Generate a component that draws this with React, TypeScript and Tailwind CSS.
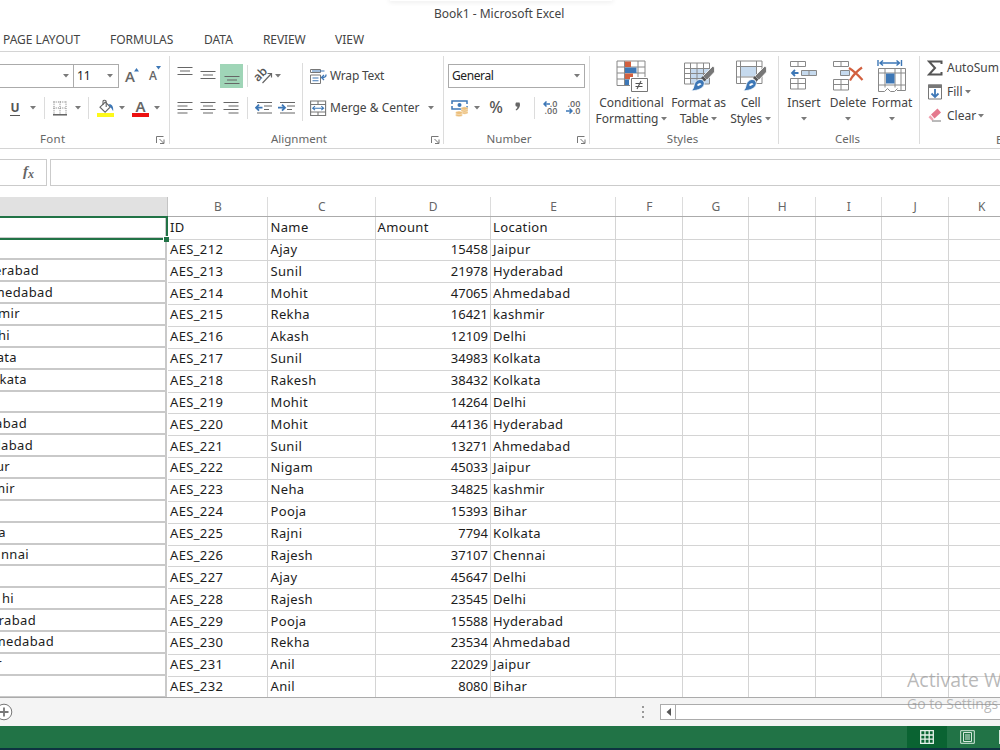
import type { ReactNode } from 'react'
import clsx from 'clsx'

type Row = {
  edge: string
  edgeEnd: number
  id: string
  name: string
  amount: string
  location: string
}

const rows: Row[] = [
  { edge: '', edgeEnd: 0, id: 'ID', name: 'Name', amount: 'Amount', location: 'Location' },
  { edge: '', edgeEnd: 0, id: 'AES_212', name: 'Ajay', amount: '15458', location: 'Jaipur' },
  { edge: 'erabad', edgeEnd: 39, id: 'AES_213', name: 'Sunil', amount: '21978', location: 'Hyderabad' },
  { edge: 'medabad', edgeEnd: 53, id: 'AES_214', name: 'Mohit', amount: '47065', location: 'Ahmedabad' },
  { edge: 'mir', edgeEnd: 20, id: 'AES_215', name: 'Rekha', amount: '16421', location: 'kashmir' },
  { edge: 'hi', edgeEnd: 10, id: 'AES_216', name: 'Akash', amount: '12109', location: 'Delhi' },
  { edge: 'ata', edgeEnd: 17, id: 'AES_217', name: 'Sunil', amount: '34983', location: 'Kolkata' },
  { edge: 'kata', edgeEnd: 27, id: 'AES_218', name: 'Rakesh', amount: '38432', location: 'Kolkata' },
  { edge: '', edgeEnd: 0, id: 'AES_219', name: 'Mohit', amount: '14264', location: 'Delhi' },
  { edge: 'abad', edgeEnd: 27, id: 'AES_220', name: 'Mohit', amount: '44136', location: 'Hyderabad' },
  { edge: 'dabad', edgeEnd: 33, id: 'AES_221', name: 'Sunil', amount: '13271', location: 'Ahmedabad' },
  { edge: 'ur', edgeEnd: 10, id: 'AES_222', name: 'Nigam', amount: '45033', location: 'Jaipur' },
  { edge: 'mir', edgeEnd: 15, id: 'AES_223', name: 'Neha', amount: '34825', location: 'kashmir' },
  { edge: '', edgeEnd: 0, id: 'AES_224', name: 'Pooja', amount: '15393', location: 'Bihar' },
  { edge: 'a', edgeEnd: 6, id: 'AES_225', name: 'Rajni', amount: '7794', location: 'Kolkata' },
  { edge: 'nnai', edgeEnd: 29, id: 'AES_226', name: 'Rajesh', amount: '37107', location: 'Chennai' },
  { edge: '', edgeEnd: 0, id: 'AES_227', name: 'Ajay', amount: '45647', location: 'Delhi' },
  { edge: 'hi', edgeEnd: 14, id: 'AES_228', name: 'Rajesh', amount: '23545', location: 'Delhi' },
  { edge: 'rabad', edgeEnd: 36, id: 'AES_229', name: 'Pooja', amount: '15588', location: 'Hyderabad' },
  { edge: 'medabad', edgeEnd: 54, id: 'AES_230', name: 'Rekha', amount: '23534', location: 'Ahmedabad' },
  { edge: 'r', edgeEnd: 2, id: 'AES_231', name: 'Anil', amount: '22029', location: 'Jaipur' },
  { edge: '', edgeEnd: 0, id: 'AES_232', name: 'Anil', amount: '8080', location: 'Bihar' },
]

const letters = ['B', 'C', 'D', 'E', 'F', 'G', 'H', 'I', 'J', 'K']
const emptyColumns = ['F', 'G', 'H', 'I', 'J', 'K']

const columns = 'grid w-[1015px] grid-cols-[168px_100px_107.5px_115.5px_125px_66.5px_66.5px_66.5px_66.5px_66.5px_66.5px]'

function Caret() {
  return (
    <svg width="6" height="4" viewBox="0 0 6 4" className="shrink-0">
      <path d="M0 0h6L3 3.6z" fill="#7a7a7a" />
    </svg>
  )
}

function Slot({ className, children }: { className: string; children?: ReactNode }) {
  return <div className={clsx('flex h-full shrink-0 items-center justify-center', className)}>{children}</div>
}

function Rule({ className }: { className?: string }) {
  return <div className={clsx('h-[22px] w-px shrink-0 bg-[#dcdcdc]', className)} />
}

function Launcher() {
  return (
    <svg width="9" height="8" viewBox="0 0 9 8" fill="none" stroke="#777">
      <path d="M.5 7V.5h7M3.5 3l4 4M8 3.5v4H4" />
    </svg>
  )
}

function Group({ label, className, launcher, children }: { label: string; className: string; launcher?: boolean; children: ReactNode }) {
  return (
    <section className={clsx('flex h-full shrink-0 flex-col pt-2', className)}>
      <div className="h-16">{children}</div>
      <div className="flex h-6 items-center pt-[5px] text-[11.5px] text-[#666]">
        <span className="flex-1 pr-[3px] text-center">{label}</span>
        {launcher ? <span className="w-[11px] shrink-0 pt-0.5"><Launcher /></span> : null}
      </div>
    </section>
  )
}

function Divider() {
  return <div className="mt-1 h-[88px] w-px shrink-0 bg-[#dcdcdc]" />
}

function Lines({ d }: { d: string }) {
  return (
    <svg width="16" height="20" viewBox="0 0 16 20" fill="none" stroke="#666" strokeWidth="1.2">
      <path d={d} />
    </svg>
  )
}

function GrowFont({ shrink }: { shrink?: boolean }) {
  return (
    <span className="flex items-start font-['Open_Sans',sans-serif] text-[#666]">
      <span className={clsx('font-semibold', shrink ? 'text-[12px] leading-[20px]' : 'text-[15px] leading-[17px]')}>A</span>
      <svg width="5" height="4" viewBox="0 0 5 4" className="-ml-px">
        <path d={shrink ? 'M0 0h5L2.5 3.5z' : 'M0 3.5h5L2.5 0z'} fill="#3d77b6" />
      </svg>
    </span>
  )
}

function BordersIcon() {
  return (
    <svg width="15" height="15" viewBox="0 0 15 15" fill="none">
      <path d="M.5 1h13M.5 7h13M1 .5V13M7 .5V13M13 .5V13" stroke="#777" strokeDasharray="1 1.2" />
      <path d="M0 13.8h14" stroke="#555" strokeWidth="1.4" />
    </svg>
  )
}

function FillColorIcon() {
  return (
    <svg width="18" height="19" viewBox="0 0 18 19" fill="none">
      <path d="M3 8.2 8.3 3l5 5-5.2 5.2z" fill="#fff" stroke="#666" strokeWidth="1.1" />
      <path d="M6 6V2.5C6 .8 9.2.8 9.2 2.5V8" stroke="#666" strokeWidth="1.1" />
      <path d="M11.5 5.5c3-.8 5 1.5 4.7 6.5-1.2-.7-1-2.3-3-4z" fill="#3d77b6" />
      <path d="M0 14h17v4H0z" fill="#fdf91a" />
    </svg>
  )
}

function OrientationIcon() {
  return (
    <svg width="20" height="18" viewBox="0 0 20 18" fill="none" className="overflow-visible">
      <text x="1" y="13.5" transform="rotate(-45 4 12)" fontSize="12" fontWeight="600" fontFamily="Open Sans" fill="#555">ab</text>
      <path d="m7.5 16 8.5-9M12.5 6.5h4v4" stroke="#666" strokeWidth="1.2" />
    </svg>
  )
}

function IndentIcon({ right }: { right?: boolean }) {
  return (
    <svg width="18" height="14" viewBox="0 0 18 14" fill="none">
      <path d="M2 1.5h15M9 5h8M9 8.5h5M2 12h15" stroke="#666" strokeWidth="1.2" />
      <path d={right ? 'M0 6.7h6M4 3.7l3 3-3 3' : 'M7.5 6.7H1.5M4 3.7l-3 3 3 3'} stroke="#3d77b6" strokeWidth="1.8" />
    </svg>
  )
}

function WrapIcon() {
  return (
    <svg width="17" height="17" viewBox="0 0 17 17" fill="none">
      <path d="M.5 1.5h10v3H.5zM.5 7h10v8.5H.5z" stroke="#777" />
      <path d="M2 3h12.5M2.5 10h6M2.5 12.7h6" stroke="#3d77b6" strokeWidth="1.1" />
      <path d="M16 6.5c.2 2-1 3-4 3M14 7l-2.5 2.5L14 12" stroke="#3d77b6" strokeWidth="1.3" />
    </svg>
  )
}

function MergeIcon() {
  return (
    <svg width="17" height="17" viewBox="0 0 17 17" fill="none">
      <path d="M.6 1h15v14.5H.6zM.6 4.5h15M.6 12h15M8 1v3.5M8 12v3.5" stroke="#777" strokeWidth="1.1" />
      <path d="M3 8.2h10.5M5 6.2l-2.3 2 2.3 2M11.3 6.2l2.3 2-2.3 2" stroke="#3d77b6" strokeWidth="1.1" />
    </svg>
  )
}

function MoneyIcon() {
  return (
    <svg width="18" height="17" viewBox="0 0 18 17" fill="none">
      <path d="M1 1h15v8H1z" stroke="#3d77b6" strokeWidth="1.5" />
      <path d="M1 4v2M16 4v2" stroke="#fff" strokeWidth="2" />
      <circle cx="8.5" cy="5" r="2" fill="#3d77b6" />
      <g fill="#ecbf7b" stroke="#fff" strokeWidth=".4">
        <ellipse cx="13.5" cy="12.5" rx="3.5" ry="1.7" />
        <ellipse cx="13.5" cy="10.5" rx="3.5" ry="1.7" />
        <ellipse cx="13.5" cy="8.5" rx="3.5" ry="1.7" />
        <ellipse cx="8" cy="15" rx="3.5" ry="1.7" />
        <ellipse cx="8" cy="12.8" rx="3.5" ry="1.7" />
      </g>
    </svg>
  )
}

function DecimalIcon({ decrease }: { decrease?: boolean }) {
  const arrow = (
    <svg width="7" height="6" viewBox="0 0 7 6" fill="none" stroke="#3d77b6" strokeWidth="1.5">
      <path d={decrease ? 'M0 3h6M3.5.5 6 3 3.5 5.5' : 'M7 3H1M3.5.5 1 3l2.5 2.5'} />
    </svg>
  )
  return (
    <div className="-mt-0.5 flex flex-col items-end font-['Open_Sans',sans-serif] text-[9px] leading-[7px] font-semibold text-[#666]">
      <span className="flex items-center">{decrease ? null : arrow}{decrease ? '.00' : '.0'}</span>
      <span className="flex items-center">{decrease ? arrow : null}{decrease ? '.0' : '.00'}</span>
    </div>
  )
}

function ConditionalIcon() {
  return (
    <svg width="32" height="32" viewBox="0 0 32 32" fill="none">
      <path d="M1 1h28v24H1z" fill="#fff" />
      <path d="M1 1h28v24.5H1zM1 7h28M1 13h28M1 19h28M8.5 1v24.5M22 1v24.5" stroke="#888" />
      <path d="M9 1.5h6V7H9zM9 13.5h8V19H9z" fill="#d2603f" />
      <path d="M9 7.5h11.5V13H9zM9 19.5h4V25H9z" fill="#3d77b6" />
      <path d="M14 17h18v15H14z" fill="#fff" />
      <path d="M15.5 18.5h16v13h-16z" stroke="#777" />
      <path d="M19.5 23.5h7M19.5 26.5h7M25 21l-4 8" stroke="#555" strokeWidth="1.1" />
    </svg>
  )
}

function Brush() {
  return (
    <>
      <path d="m29.5 6.500 2 .5v5l-7.500 8-4-4z" fill="#777" stroke="#fff" strokeWidth=".8" />
      <path d="m20 16 3.500 3.500-2 2-3.500-3.500z" fill="#555" />
      <path d="M18 19.500c2 .3 3.500 2 3.300 4.200-.5 4.300-5.800 7-13.300 7 3.200-1.500 2.600-5.500 4-8 1.200-2.200 3.700-3.500 6-3.200z" fill="#3d77b6" stroke="#fff" strokeWidth=".8" />
      <path d="M14 25c1.500-2.300 4-2 4.500-.5-1.500.2-2 1.500-3.500 1.500z" fill="#fff" />
    </>
  )
}

function FormatTableIcon() {
  return (
    <svg width="32" height="32" viewBox="0 0 32 32" fill="none">
      <path d="M7.5 9h19v15h-19z" fill="#c6daee" />
      <path d="M1.5 3h25v21h-25zM1 8.5h25.500M1 13.5h25.500M1 18.5h25.500M7.500 3v21M14 3v21M20.500 3v21" stroke="#888" />
      <Brush />
    </svg>
  )
}

function CellStylesIcon() {
  return (
    <svg width="32" height="32" viewBox="0 0 32 32" fill="none">
      <path d="M6 7h15v9.5H6z" fill="#c6daee" />
      <path d="M1.5 1h25.500v22.5H1.500zM1 6.5h26M1 17h26M5.5 1v22.5M21.5 1v22.5" stroke="#888" />
      <Brush />
    </svg>
  )
}

function InsertIcon() {
  return (
    <svg width="28" height="32" viewBox="0 0 28 32" fill="none">
      <path d="M.5 1.5h15v5H.5zM8 1.5v5M.5 18.5h15V29H.5zM8 18.5V29M.5 23.5h15" stroke="#888" />
      <path d="M11.5 10.5h15v5h-15z" fill="#c6daee" stroke="#888" />
      <path d="M19 10.5v5" stroke="#888" />
      <path d="M8.5 13h-6M5 10l-3 3 3 3" stroke="#3d77b6" strokeWidth="1.8" />
    </svg>
  )
}

function DeleteIcon() {
  return (
    <svg width="31" height="32" viewBox="0 0 31 32" fill="none">
      <path d="M.5 1.5h15v5H.5zM8 1.5v5M.5 19.5h15V30H.5zM8 19.5V30M.5 24.5h15" stroke="#888" />
      <path d="M7.5 10.5h9v5h-9z" fill="#c6daee" stroke="#888" />
      <path d="M16 8c5 3 9 7 13.5 12M29 7.5C24 11 20 15 17 20.5" stroke="#d2603f" strokeWidth="2.2" />
    </svg>
  )
}

function FormatIcon() {
  return (
    <svg width="31" height="34" viewBox="0 0 31 34" fill="none">
      <path d="M1 0v6M24.5 0v6M3 3h19.5M6 .5 3 3l3 2.5M19.5.5l3 2.5-3 2.5" stroke="#3d77b6" strokeWidth="1.4" />
      <path d="M1.5 8.5h27v22h-27zM1.5 13h27M1.5 25h27M8 8.5v19M18 8.5v19M24 8.5v22" stroke="#888" />
      <path d="M2 28h18v5H2z" fill="#fff" />
      <path d="M9 13.5h8.5v10H9z" fill="#3d77b6" />
      <path d="M1.5 28.5v3h6l3-3 3 3h4l3-3" stroke="#888" />
    </svg>
  )
}

function BigButton({ className, icon, label, second }: { className: string; icon: ReactNode; label: string; second?: string }) {
  return (
    <div className={clsx('flex shrink-0 flex-col items-center text-[12px] leading-4 whitespace-nowrap text-[#444]', className)}>
      <div className="flex h-[35px] items-start">{icon}</div>
      <span>{label}</span>
      <span className="flex h-4 items-center gap-[3px]">
        {second}
        <Caret />
      </span>
    </div>
  )
}

function TitleBar() {
  return (
    <header className="h-[51px] font-['Noto_Sans',sans-serif] text-[12px] text-[#444]">
      <div className="relative flex h-7 items-center pl-[434px]">
        <div className="absolute top-0 left-[390px] h-px w-[222px] shadow-[0_0_5px_1px_#e6e6e6]" />
        <span>Book1 - Microsoft Excel</span>
      </div>
      <nav className="flex h-[23px] items-center pt-px whitespace-nowrap">
        <span className="w-[107px] pl-[3px]">PAGE LAYOUT</span>
        <span className="w-[94px] pl-[3px]">FORMULAS</span>
        <span className="w-[59px] pl-[3px]">DATA</span>
        <span className="w-[72px] pl-[3px] tracking-[-0.1px]">REVIEW</span>
        <span className="pl-[3px]">VIEW</span>
      </nav>
    </header>
  )
}

function FontGroup() {
  return (
    <section className="flex h-full w-[169px] shrink-0 flex-col pt-2">
      <div className="flex h-8 items-center">
        <div className="-ml-px flex h-6 w-[75px] items-center justify-end border border-[#ababab] pr-1"><Caret /></div>
        <div className="-ml-px flex h-6 w-[46px] items-center justify-between border border-[#ababab] pr-[5px] pl-[3px] text-[12px] text-[#222]">11<Caret /></div>
        <Slot className="ml-[5px] w-4"><GrowFont /></Slot>
        <Slot className="ml-[7px] w-4"><GrowFont shrink /></Slot>
      </div>
      <div className="flex h-8 items-center">
        <Slot className="ml-[5px] w-5 text-[12px] font-bold text-[#555]"><span className="border-b border-[#555] leading-[14px]">U</span></Slot>
        <Slot className="ml-px w-[14px]"><Caret /></Slot>
        <Rule className="ml-1" />
        <Slot className="ml-[8px] w-[15px]"><BordersIcon /></Slot>
        <Slot className="ml-1 w-3"><Caret /></Slot>
        <Rule className="ml-[4px]" />
        <Slot className="ml-[8px] w-[18px]"><FillColorIcon /></Slot>
        <Slot className="ml-px w-3"><Caret /></Slot>
        <Slot className="ml-[4px] w-[17px]">
          <span className="w-full border-b-4 border-[#ec1010] text-center text-[15px] leading-[13px] font-semibold text-[#666]">A</span>
        </Slot>
        <Slot className="ml-0.5 w-3"><Caret /></Slot>
      </div>
      <div className="flex h-6 items-center justify-between pt-[5px] pr-1 pl-10 text-[11.5px] tracking-[0.3px] text-[#666]">
        Font
        <span className="pt-0.5"><Launcher /></span>
      </div>
    </section>
  )
}

function AlignmentGroup() {
  return (
    <Group label="Alignment" className="w-[273px] pr-[1px]" launcher>
      <div className="flex">
        <div className="w-[132px]">
          <div className="flex h-8 items-center">
            <Slot className="ml-[7px] w-4"><Lines d="M.5 1.5h15M3 5h10M.5 8.5h15" /></Slot>
            <Slot className="ml-[7px] w-4"><Lines d="M.5 5.5h15M3 9h10M.5 12.5h15" /></Slot>
            <div className="ml-[4px] flex h-6 w-[23px] shrink-0 items-center justify-center bg-[#9fd5b7]"><Lines d="M.5 10.5h15M3 14h10M.5 17.5h15" /></div>
            <Rule className="ml-[4px]" />
            <Slot className="ml-[7px] w-5"><OrientationIcon /></Slot>
            <Slot className="-ml-[3px] w-3"><Caret /></Slot>
          </div>
          <div className="flex h-8 items-center">
            <Slot className="ml-[7px] w-4"><Lines d="M.5 4.5h15M.5 8h10M.5 11.5h15M.5 15h10" /></Slot>
            <Slot className="ml-[7px] w-4"><Lines d="M.5 4.5h15M3 8h10M.5 11.5h15M3 15h10" /></Slot>
            <Slot className="ml-[7px] w-4"><Lines d="M.5 4.5h15M5.5 8h10M.5 11.5h15M5.5 15h10" /></Slot>
            <Rule className="ml-[8px]" />
            <Slot className="ml-[7px] w-[18px]"><IndentIcon /></Slot>
            <Slot className="ml-[5px] w-[18px]"><IndentIcon right /></Slot>
          </div>
        </div>
        <div className="mt-[3px] h-[58px] w-px bg-[#dcdcdc]" />
        <div className="pl-[7px] text-[12px] whitespace-nowrap text-[#444]">
          <div className="flex h-8 items-center gap-[3px]"><WrapIcon /><span className="tracking-[-0.2px]">Wrap Text</span></div>
          <div className="flex h-8 items-center gap-[3px]"><MergeIcon /><span>Merge &amp; Center</span><span className="pl-[5px]"><Caret /></span></div>
        </div>
      </div>
    </Group>
  )
}

function NumberGroup() {
  return (
    <Group label="Number" className="w-[145px] pr-px" launcher>
      <div className="flex h-8 items-center">
        <div className="ml-1 flex h-6 w-[137px] shrink-0 items-center justify-between border border-[#ababab] pr-1 pl-[3px] text-[12px] text-[#222]"><span className="tracking-[-0.4px]">General</span><Caret /></div>
      </div>
      <div className="flex h-8 items-center text-[#555]">
        <Slot className="ml-[7px] w-[18px]"><MoneyIcon /></Slot>
        <Slot className="ml-[2px] w-3"><Caret /></Slot>
        <Slot className="ml-[5px] w-4 pb-0.5 text-[16px] font-medium">%</Slot>
        <Slot className="ml-[8px] w-3">
          <svg width="6" height="9" viewBox="0 0 6 9" className="-mt-1"><path d="M1 .5h3.5c1.500 3-.5 7-3.500 8l-.3-1C2 6.500 2.500 5.500 2.300 4.500H1C.2 3.500.2 1.500 1 .5z" fill="#666" /></svg>
        </Slot>
        <Rule className="ml-[10px]" />
        <Slot className="ml-[7px] w-4"><DecimalIcon /></Slot>
        <Slot className="ml-[7px] w-4"><DecimalIcon decrease /></Slot>
      </div>
    </Group>
  )
}

function Ribbon() {
  return (
    <div className="flex h-[98px] overflow-hidden border-y border-[#d4d4d4] font-['Noto_Sans',sans-serif]">
      <FontGroup />
      <Divider />
      <AlignmentGroup />
      <Divider />
      <NumberGroup />
      <Divider />
      <Group label="Styles" className="w-[188px]">
        <div className="flex">
          <BigButton className="w-[83px]" icon={<ConditionalIcon />} label="Conditional" second="Formatting" />
          <BigButton className="w-[51px] tracking-[-0.2px]" icon={<FormatTableIcon />} label="Format as" second="Table" />
          <BigButton className="w-[53px] tracking-[-0.2px]" icon={<CellStylesIcon />} label="Cell" second="Styles" />
        </div>
      </Group>
      <Divider />
      <Group label="Cells" className="w-[140px]">
        <div className="flex pl-[3px]">
          <BigButton className="w-[44px]" icon={<InsertIcon />} label="Insert" />
          <BigButton className="w-[44px]" icon={<DeleteIcon />} label="Delete" />
          <BigButton className="w-[44px]" icon={<FormatIcon />} label="Format" />
        </div>
      </Group>
      <Divider />
      <section className="flex shrink-0 flex-col pt-1 pl-[7px] text-[12px] whitespace-nowrap text-[#444]">
        <div className="flex h-6 shrink-0 items-center gap-1">
          <svg width="16" height="16" viewBox="0 0 16 16" fill="none">
            <path d="M14.5 4V1.5H2L8 8l-6 6.5h12.5V12" stroke="#555" strokeWidth="2" />
          </svg>
          AutoSum
        </div>
        <div className="flex h-6 shrink-0 items-center gap-1">
          <svg width="16" height="16" viewBox="0 0 16 16" fill="none">
            <path d="M1.5 1h13v14h-13z" stroke="#777" />
            <path d="M1 .5h14V4H1z" fill="#777" />
            <path d="M8 5v8M4.5 9.5 8 13l3.5-3.5" stroke="#3d77b6" strokeWidth="1.8" />
          </svg>
          <span className="flex items-center gap-0.5">Fill<Caret /></span>
        </div>
        <div className="flex h-6 shrink-0 items-center gap-1">
          <svg width="16" height="16" viewBox="0 0 16 16" fill="none">
            <path d="m4 6.500 6.500-6L14 4.500 7.500 10.500z" fill="#e5788d" />
            <path d="m3.300 7.200 3.500 4L5 12.700 1.500 9.300z" fill="#f0a3b1" />
            <path d="M5 13h9" stroke="#777" />
          </svg>
          <span className="flex items-center gap-0.5">Clear<Caret /></span>
        </div>
        <div className="flex h-6 shrink-0 items-center pl-[69px] text-[11.5px] text-[#666]">Editing</div>
      </section>
    </div>
  )
}

function FormulaBar() {
  return (
    <div className="flex h-12 gap-[3px] pt-[10px]">
      <div className="flex h-[27px] w-[47px] shrink-0 items-center justify-end border border-l-0 border-[#cbcbcb] pr-3 pb-0.5 font-['Liberation_Serif',serif] text-[#666] italic">
        <span className="text-[15px] font-bold">f</span>
        <span className="pt-1 text-[12px] font-bold">x</span>
      </div>
      <div className="h-[27px] flex-1 border border-r-0 border-[#cbcbcb]" />
    </div>
  )
}

function Sheet() {
  return (
    <main className="relative h-[501px] overflow-hidden border-b border-[#ababab]">
      <div className={clsx(columns, "h-5 border-b border-[#ababab] font-['Noto_Sans',sans-serif] text-[12px] text-[#666]")}>
        <div className="border-r border-[#c4c4c4] bg-[#e1e1e1]" />
        {letters.map((letter) => (
          <div key={letter} className="flex items-center justify-center border-r border-[#dcdcdc] pl-px">{letter}</div>
        ))}
      </div>
      <div className="grid h-[481px] grid-rows-[repeat(22,minmax(0,1fr))] font-['Noto_Sans',sans-serif] text-[13px] leading-[21.5px] tracking-[0.35px] text-[#1c1c1c]">
        {rows.map((row, index) => (
          <div key={row.id} className={columns}>
            <div className="-mt-px mb-px mr-px overflow-hidden border-r-2 border-b-2 border-[#c9c9c9]">
              <div className="flex justify-end overflow-hidden" style={{ width: row.edgeEnd }}>{row.edge}</div>
            </div>
            <div className="border-r border-b border-[#d4d4d4] pl-[2px]">{row.id}</div>
            <div className="border-r border-b border-[#d4d4d4] pl-[2.5px]">{row.name}</div>
            <div className={clsx('border-r border-b border-[#d4d4d4] px-[2px]', index > 0 && 'text-right tracking-normal')}>{row.amount}</div>
            <div className="border-r border-b border-[#d4d4d4] pl-[2px]">{row.location}</div>
            {emptyColumns.map((column) => (
              <div key={column} className="border-r border-b border-[#d4d4d4]" />
            ))}
          </div>
        ))}
      </div>
      <div className="absolute top-[19px] -left-1 h-[24px] w-[172px] border-2 border-[#217346]">
        <div className="absolute -right-[3px] -bottom-[4px] size-[6px] border-t border-l border-white bg-[#217346]" />
      </div>
    </main>
  )
}

function BottomBars() {
  return (
    <footer>
      <div className="flex h-7 items-center bg-[#f4f4f4]">
        <svg width="13" height="18" viewBox="0 0 13 18" fill="none" stroke="#777">
          <circle cx="4" cy="9" r="7.8" fill="#fff" />
          <path d="M-.5 9h9M4 4.5v9" strokeWidth="1.8" />
        </svg>
        <svg width="2" height="12" viewBox="0 0 2 12" className="ml-[629px]" fill="#999">
          <path d="M0 0h2v2H0zM0 5h2v2H0zM0 10h2v2H0z" />
        </svg>
        <div className="ml-4 flex h-4 flex-1 border border-r-0 border-[#ababab] bg-white">
          <div className="flex w-[15px] items-center justify-center border-r border-[#ababab]">
            <svg width="5" height="8" viewBox="0 0 5 8"><path d="M5 0v8L.5 4z" fill="#555" /></svg>
          </div>
        </div>
      </div>
      <div className="flex h-6 justify-end overflow-hidden border-b-2 border-[#0d3340] bg-[#217346]">
        <div className="flex w-10 items-center justify-center bg-[#0a6332]">
          <svg width="14" height="14" viewBox="0 0 14 14" fill="none" stroke="#e6f2ea" strokeWidth="1.3">
            <path d="M.7.7h12.6v12.6H.7zM.7 5h12.6M.7 9.2h12.6M5 .7v12.6M9.2.7v12.6" />
          </svg>
        </div>
        <div className="flex w-10 items-center justify-center">
          <svg width="15" height="14" viewBox="0 0 15 14" fill="none" stroke="#d5e8dc">
            <path d="M.7.7h13.6v12.6H.7zM3.5 2.5h8v9h-8zM5 5h5M5 7h5M5 9h5" />
          </svg>
        </div>
        <div className="flex w-[13px] items-center justify-end">
          <div className="h-[14px] w-px bg-[#d5e8dc]" />
        </div>
      </div>
    </footer>
  )
}

export default function App() {
  return (
    <div className="relative h-[750px] w-[1000px] overflow-hidden bg-white">
      <TitleBar />
      <Ribbon />
      <FormulaBar />
      <Sheet />
      <BottomBars />
      <div className="absolute top-[668px] left-[907px] font-['Open_Sans',sans-serif] whitespace-nowrap text-[#8a8a8a]/60">
        <p className="text-[19.5px] leading-6">Activate Windows</p>
        <p className="text-[14px] leading-6">Go to Settings to activate Windows.</p>
      </div>
    </div>
  )
}
